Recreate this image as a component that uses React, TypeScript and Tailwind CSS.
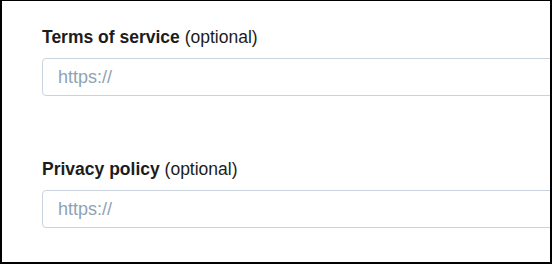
import React from "react";

const FIELDS = [
  { id: "tos", label: "Terms of service" },
  { id: "privacy", label: "Privacy policy" },
];

function UrlField({ id, label }: { id: string; label: string }) {
  return (
    <div className="flex flex-col">
      <label htmlFor={id} className="text-[17.5px] leading-[20px] text-[#1c1c1c]">
        <span className="font-bold">{label}</span> (optional)
      </label>
      <input
        id={id}
        type="text"
        placeholder="https://"
        className="mt-[11px] h-[38px] w-[530px] rounded-[4px] border border-[#c9d4df] bg-white px-[15px] text-[18px] text-[#1c1c1c] outline-none placeholder:text-[#8ea2b4]"
      />
    </div>
  );
}

export default function App() {
  return (
    <div
      className="h-[264px] w-[552px] overflow-hidden border-t-[1px] border-l-[2px] border-r-[2px] border-b-[2px] border-black bg-white"
      style={{ fontFamily: '"Liberation Sans", Arial, sans-serif' }}
    >
      <div className="flex flex-col gap-[63px] pl-[40px] pt-[26px]">
        {FIELDS.map((f) => (
          <UrlField key={f.id} id={f.id} label={f.label} />
        ))}
      </div>
    </div>
  );
}
